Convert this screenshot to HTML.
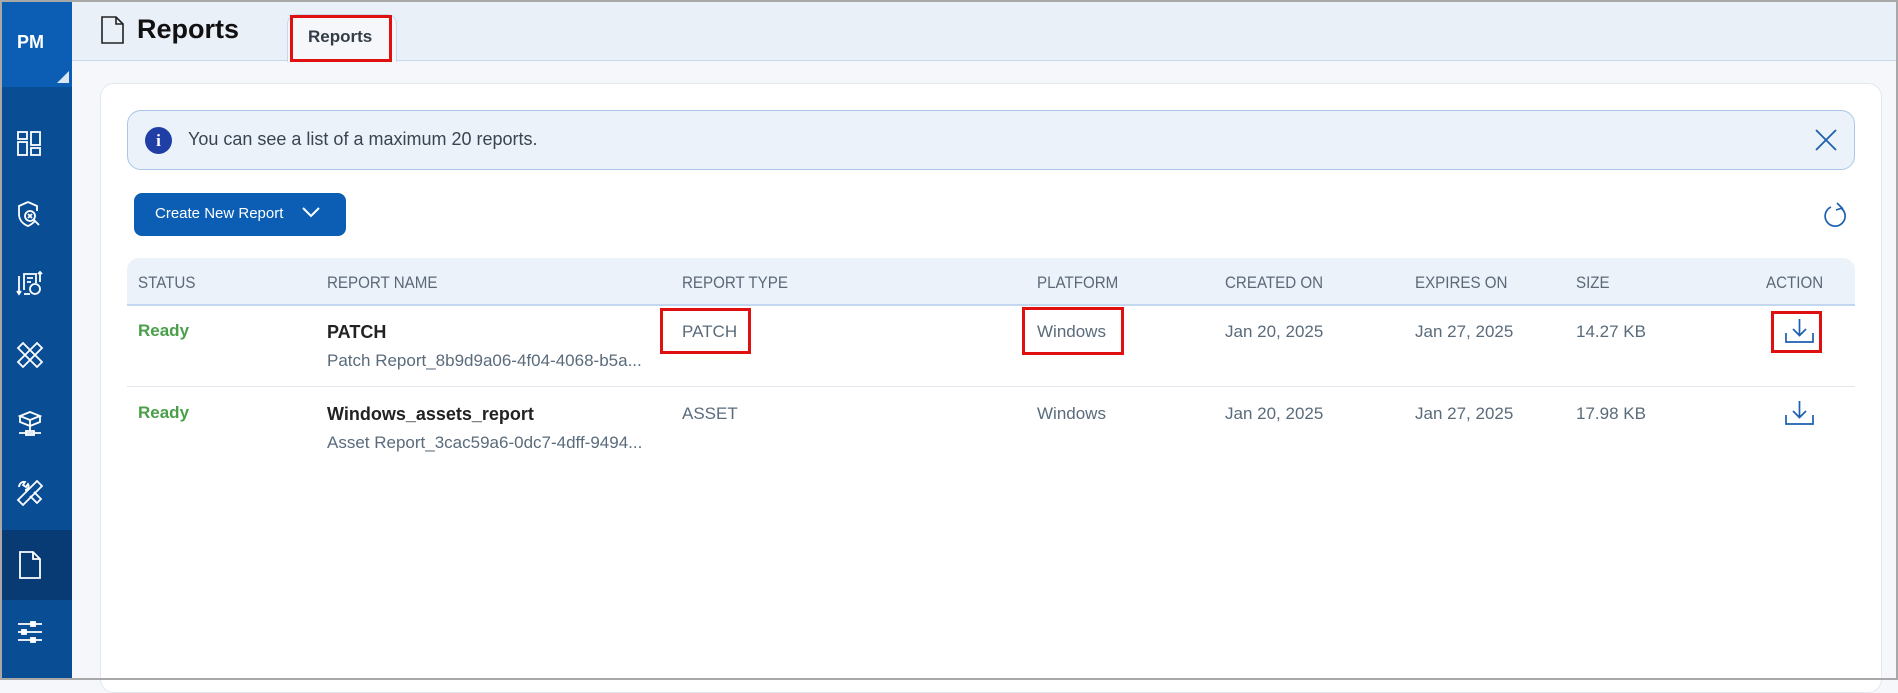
<!DOCTYPE html>
<html><head><style>
*{margin:0;padding:0;box-sizing:border-box}
body{width:1898px;height:680px;overflow:hidden;background:#f5f7fa;font-family:"Liberation Sans",sans-serif;position:relative}
.a{position:absolute}
.t{font-family:"Liberation Sans Narrow","Liberation Sans",sans-serif;font-size:17px;color:#5a6b7b;white-space:nowrap}
.h{font-family:"Liberation Sans Narrow","Liberation Sans",sans-serif;font-size:17px;color:#5b6878;top:273px;transform:scaleX(.89);transform-origin:left}
.red{position:absolute;border:3px solid #e01010}
svg{position:absolute}
</style></head><body>
<div class="a" style="left:0;top:0;width:1898px;height:680px;border:2px solid #a8a8a8;z-index:50;pointer-events:none"></div>
<!-- sidebar -->
<div class="a" style="left:0;top:0;width:72px;height:680px;background:#094e95"></div>
<div class="a" style="left:0;top:0;width:72px;height:87px;background:#0b5eb3"></div>
<div class="a" style="left:17px;top:32px;color:#fff;font-weight:bold;font-size:18px">PM</div>
<div class="a" style="left:57px;top:71px;width:0;height:0;border-left:12px solid transparent;border-bottom:12px solid #dbe6f3"></div>
<div class="a" style="left:0;top:530px;width:72px;height:70px;background:#083a73"></div>
<svg style="left:16px;top:130px" width="28" height="28" viewBox="0 0 28 28" fill="none" stroke="#fff" stroke-width="1.8"><rect x="2" y="2" width="9" height="7"/><rect x="2" y="12" width="9" height="13"/><rect x="15" y="2" width="9" height="13"/><rect x="15" y="18" width="9" height="7"/></svg>
<svg style="left:16px;top:200px" width="28" height="30" viewBox="0 0 28 30" fill="none" stroke="#fff" stroke-width="1.8"><path d="M12 2L3 6v8c0 6 4 10 9 12c3-1 5-3 7-5"/><path d="M12 2l9 4v5"/><circle cx="14" cy="16" r="5"/><path d="M18 20l5 5M12 14l4 4M16 14l-4 4"/></svg>
<svg style="left:16px;top:270px" width="28" height="28" viewBox="0 0 28 28" fill="none" stroke="#fff" stroke-width="1.8"><path d="M3 6v17M1 21l2 3 2-3M8 20V4h12v9M11 8h6M11 12h4"/><path d="M24 2v10M22 4l2-2 2 2"/><circle cx="19" cy="19" r="5"/><path d="M8 24h6"/></svg>
<svg style="left:16px;top:341px" width="28" height="28" viewBox="0 0 28 28" fill="none" stroke="#fff" stroke-width="1.8"><path d="M7 2l19 19-5 5L2 7z"/><path d="M21 2l5 5L7 26l-5-5z"/></svg>
<svg style="left:16px;top:410px" width="28" height="28" viewBox="0 0 28 28" fill="none" stroke="#fff" stroke-width="1.8"><path d="M4 6l10-4 10 4-10 4z"/><path d="M4 6v6l10 4 10-4V6M14 10v6M14 16v5M3 23h22"/><rect x="10" y="21" width="8" height="4"/></svg>
<svg style="left:16px;top:479px" width="28" height="28" viewBox="0 0 28 28" fill="none" stroke="#fff" stroke-width="1.8"><path d="M21 2l5 5L7 26l-5-5z"/><path d="M3 8c0-3 3-6 6-5l-2 3 3 2 2-3c2 3-1 6-3 6"/><path d="M14 17l7 7 4-4-7-7"/></svg>
<svg style="left:18px;top:550px" width="24" height="30" viewBox="0 0 24 30" fill="none" stroke="#fff" stroke-width="1.8"><path d="M2 2h13l7 7v19H2z"/><path d="M15 2v7h7"/></svg>
<svg style="left:16px;top:621px" width="28" height="26" viewBox="0 0 28 26" fill="none" stroke="#fff" stroke-width="1.8"><path d="M2 3h24M2 11h24M2 19h24"/><rect x="15" y="1" width="4" height="4" fill="#fff"/><rect x="6" y="9" width="4" height="4" fill="#fff"/><rect x="15" y="17" width="4" height="4" fill="#fff"/></svg>
<!-- header -->
<div class="a" style="left:72px;top:0;width:1826px;height:61px;background:#eaf0f8;border-bottom:1px solid #c8d8ea"></div>
<svg style="left:100px;top:16px" width="25" height="29" viewBox="0 0 25 29" fill="none" stroke="#222" stroke-width="1.6"><path d="M2 1h14l7 7v19H2z"/><path d="M16 1v7h7"/></svg>
<div class="a" style="left:137px;top:14px;font-size:27px;font-weight:bold;color:#111">Reports</div>
<div class="a" style="left:287px;top:14px;width:110px;height:48px;background:#f5f7fa;border:1px solid #c8d8ea;border-bottom:none;border-radius:10px 10px 0 0"></div>
<div class="a" style="left:308px;top:27px;font-size:17px;font-weight:bold;color:#333d48">Reports</div>
<div class="red" style="left:290px;top:15px;width:102px;height:47px"></div>
<!-- card -->
<div class="a" style="left:100px;top:83px;width:1782px;height:610px;background:#fff;border:1px solid #e3e8ee;border-radius:14px"></div>
<div class="a" style="left:127px;top:110px;width:1728px;height:60px;background:#ecf2f9;border:1px solid #a9c6e6;border-radius:14px"></div>
<div class="a" style="left:145px;top:127px;width:27px;height:27px;border-radius:50%;background:#1f3fa6;color:#fff;font-family:'Liberation Serif',serif;font-weight:bold;font-size:17px;text-align:center;line-height:27px">i</div>
<div class="a" style="left:188px;top:129px;font-size:18px;color:#3a4450">You can see a list of a maximum 20 reports.</div>
<svg style="left:1815px;top:129px" width="22" height="22" viewBox="0 0 22 22" stroke="#1d5fb0" stroke-width="1.8"><path d="M1 1l20 20M21 1L1 21"/></svg>
<div class="a" style="left:134px;top:193px;width:212px;height:43px;background:#0b5eb3;border-radius:8px"></div>
<div class="a" style="left:155px;top:205px;font-size:15px;color:#fff">Create New Report</div>
<svg style="left:301px;top:206px" width="20" height="13" viewBox="0 0 20 13" fill="none" stroke="#fff" stroke-width="2"><path d="M2 2l8 8 8-8"/></svg>
<svg style="left:1823px;top:201px" width="26" height="28" viewBox="0 0 26 28" fill="none" stroke="#1d5fb0" stroke-width="1.7"><path d="M18 7A10 10 0 1 1 8 6"/><path d="M14 2l5 5-6 2"/></svg>
<!-- table -->
<div class="a" style="left:127px;top:258px;width:1728px;height:48px;background:#ecf2f9;border-radius:12px 12px 0 0;border-bottom:2px solid #c3d8ee"></div>
<div class="a h" style="left:138px">STATUS</div>
<div class="a h" style="left:327px">REPORT NAME</div>
<div class="a h" style="left:682px">REPORT TYPE</div>
<div class="a h" style="left:1037px">PLATFORM</div>
<div class="a h" style="left:1225px">CREATED ON</div>
<div class="a h" style="left:1415px">EXPIRES ON</div>
<div class="a h" style="left:1576px">SIZE</div>
<div class="a h" style="left:1766px">ACTION</div>
<div class="a" style="left:127px;top:386px;width:1728px;height:1px;background:#e2e8ee"></div>
<div class="a" style="left:138px;top:321px;font-size:17px;font-weight:bold;color:#4aa04a">Ready</div>
<div class="a" style="left:327px;top:322px;font-size:18px;font-weight:bold;color:#222">PATCH</div>
<div class="a t" style="left:327px;top:351px">Patch Report_8b9d9a06-4f04-4068-b5a...</div>
<div class="a t" style="left:682px;top:322px">PATCH</div>
<div class="a t" style="left:1037px;top:322px">Windows</div>
<div class="a t" style="left:1225px;top:322px">Jan 20, 2025</div>
<div class="a t" style="left:1415px;top:322px">Jan 27, 2025</div>
<div class="a t" style="left:1576px;top:322px">14.27 KB</div>
<div class="a" style="left:138px;top:403px;font-size:17px;font-weight:bold;color:#4aa04a">Ready</div>
<div class="a" style="left:327px;top:404px;font-size:18px;font-weight:bold;color:#222">Windows_assets_report</div>
<div class="a t" style="left:327px;top:433px">Asset Report_3cac59a6-0dc7-4dff-9494...</div>
<div class="a t" style="left:682px;top:404px">ASSET</div>
<div class="a t" style="left:1037px;top:404px">Windows</div>
<div class="a t" style="left:1225px;top:404px">Jan 20, 2025</div>
<div class="a t" style="left:1415px;top:404px">Jan 27, 2025</div>
<div class="a t" style="left:1576px;top:404px">17.98 KB</div>
<svg style="left:1785px;top:318px" width="29" height="26" viewBox="0 0 29 26" fill="none" stroke="#1d5fb0" stroke-width="1.7"><path d="M1 15v9h27v-9M14.5 1v16M8 11l6.5 6.5L21 11"/></svg>
<svg style="left:1785px;top:400px" width="29" height="26" viewBox="0 0 29 26" fill="none" stroke="#1d5fb0" stroke-width="1.7"><path d="M1 15v9h27v-9M14.5 1v16M8 11l6.5 6.5L21 11"/></svg>
<div class="red" style="left:660px;top:308px;width:91px;height:46px"></div>
<div class="red" style="left:1022px;top:307px;width:102px;height:48px"></div>
<div class="red" style="left:1771px;top:311px;width:51px;height:42px"></div>
</body></html>
